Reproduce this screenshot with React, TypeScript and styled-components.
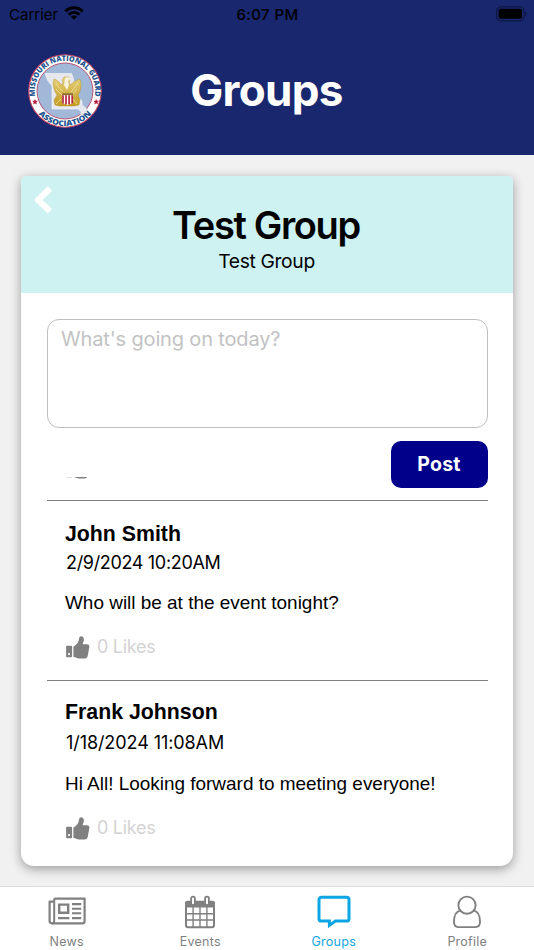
import React from "react";
import styled, { createGlobalStyle } from "styled-components";

type PostType = {
  name: string;
  date: string;
  text: string;
  likes: number;
};

type PostStylePropsType = {
  $first?: boolean;
};

type TabStylePropsType = {
  $active?: boolean;
};

const posts: PostType[] = [
  {
    name: "John Smith",
    date: "2/9/2024 10:20AM",
    text: "Who will be at the event tonight?",
    likes: 0,
  },
  {
    name: "Frank Johnson",
    date: "1/18/2024 11:08AM",
    text: "Hi All! Looking forward to meeting everyone!",
    likes: 0,
  },
];

const App = () => {
  return (
    <Screen>
      <GlobalStyle />
      <Header>
        <StatusBar>
          <Carrier>
            Carrier
            <WifiIcon />
          </Carrier>
          <Clock>6:07 PM</Clock>
          <BatteryBox>
            <BatteryIcon />
          </BatteryBox>
        </StatusBar>
        <TitleBar>
          <LogoBox>
            <Logo />
          </LogoBox>
          <PageTitle>Groups</PageTitle>
        </TitleBar>
      </Header>
      <Content>
        <Card>
          <CardHead>
            <BackBtn aria-label="Back">
              <BackIcon />
            </BackBtn>
            <GroupName>Test Group</GroupName>
            <GroupText>Test Group</GroupText>
          </CardHead>
          <CardBody>
            <PostInput placeholder="What's going on today?" />
            <PostActions>
              {/* bottom edge of the like icon scrolled under the form */}
              <ScrolledIcon>
                <LikeIcon />
              </ScrolledIcon>
              <PostBtn>Post</PostBtn>
            </PostActions>
            {posts.map((post, index) => (
              <Post key={post.name}>
                <PostName $first={index === 0}>{post.name}</PostName>
                <PostDate $first={index === 0}>{post.date}</PostDate>
                <PostText $first={index === 0}>{post.text}</PostText>
                <Likes>
                  <LikeIcon />
                  <span>{post.likes} Likes</span>
                </Likes>
              </Post>
            ))}
          </CardBody>
        </Card>
      </Content>
      <TabBar>
        <Tab>
          <NewsIcon />
          <TabLabel>News</TabLabel>
        </Tab>
        <Tab>
          <EventsIcon />
          <TabLabel>Events</TabLabel>
        </Tab>
        <Tab $active>
          <GroupsIcon />
          <TabLabel>Groups</TabLabel>
        </Tab>
        <Tab>
          <ProfileIcon />
          <TabLabel>Profile</TabLabel>
        </Tab>
      </TabBar>
    </Screen>
  );
};

export default App;

const WifiIcon = () => (
  <svg width="20" height="14" viewBox="0 0 20 14" fill="none">
    <path d="M1.4 5.4a12 12 0 0 1 17.2 0" stroke="#000" strokeWidth="3.1" />
    <path d="M4.7 8.7a7.4 7.4 0 0 1 10.6 0" stroke="#000" strokeWidth="2.7" />
    <path d="M10 13.8 6.9 10.7a4.4 4.4 0 0 1 6.2 0z" fill="#000" />
  </svg>
);

const BatteryIcon = () => (
  <svg width="32" height="16" viewBox="0 0 32 16">
    <rect
      x="0.7"
      y="0.8"
      width="27.3"
      height="14"
      rx="4"
      fill="none"
      stroke="#0e1843"
      strokeWidth="1.2"
    />
    <rect x="2.6" y="2.8" width="23.4" height="10" rx="2" fill="#000" />
    <path d="M29.4 5.4c1.6.6 1.6 4.2 0 4.8z" fill="#0e1843" />
  </svg>
);

const BackIcon = () => (
  <svg width="20" height="28" viewBox="0 0 20 28" fill="none">
    <path
      d="M14.7 4.7 5.1 14l9.6 9.1"
      stroke="#fff"
      strokeWidth="6.2"
      strokeLinejoin="round"
      strokeLinecap="square"
    />
  </svg>
);

const LikeIcon = () => (
  <svg width="24" height="23" viewBox="0 0 24 23" fill="#808080">
    <path
      fillRule="evenodd"
      d="M1 9.8h4.2a.9.9 0 0 1 .9.9v9.6a.9.9 0 0 1-.9.9H1a.9.9 0 0 1-.9-.9v-9.6a.9.9 0 0 1 .9-.9zM3 17a1.1 1.1 0 1 0 0 2.2A1.1 1.1 0 0 0 3 17z"
    />
    <path d="M7.4 10.6c2-1 3.4-2.6 4.6-4.4C13 4.6 12.800 2.400 13.600 1.100c.9-1.500 4.300-.9 4.300 2.500 0 2-1 3.300-1.200 4.600h4.200c1.900 0 2.700 1.200 2.400 3l-1.500 8.200c-.3 1.900-1.300 3-3.200 3.100-4.400.3-6.300-.1-9.200-1.100-.8-.3-1.300-.4-2-.4z" />
  </svg>
);

const Logo = () => (
  <svg width="76" height="76" viewBox="-38 -38 76 76">
    <defs>
      <path id="arcTop" d="M-29.6 6A30.2 30.2 0 1 1 29.6 6" />
      <path id="arcBottom" d="M-35 0A35 35 0 0 0 35 0" />
      <linearGradient id="gold" x1="0" y1="0" x2="0" y2="1">
        <stop offset="0" stopColor="#e5d27c" />
        <stop offset="1" stopColor="#c39a1e" />
      </linearGradient>
    </defs>
    <circle r="36.3" fill="#fff" stroke="#c5425f" strokeWidth="1.1" />
    <circle r="28" fill="#a1b8d8" stroke="#b85370" strokeWidth="1" />
    <path
      d="M-20-17.5H6.5l2 5 .5 14 4 6 4 2 0 4 5 5v4l-3 3-3-1 0-4-3-2.5H-13V-5l-4-5z"
      fill="#e6e8ed"
      stroke="#f6f6f8"
      strokeWidth="0.6"
    />
    <path
      d="M-11-12c2 0 5 3 8 6l1-3-1-2 2-3h5l1 3-1 2 1 3c3-3 7-5 10-6 2 6 1 12-2 16l2 5-1 5-5 1H-5l-5-1-1-5 3-5c-3-4-5-11-3-16z"
      fill="url(#gold)"
      stroke="#b39126"
      strokeWidth="0.4"
    />
    <path
      d="M-9-8c2 4 5 7 7 8M13-8C10-4 8-1 6 1M-9-2l6 6M12-2 7 4M-9 13l5-5M12 13 8 8"
      stroke="#f8edb8"
      strokeWidth="0.7"
      fill="none"
    />
    <path d="m0-13 3-1 3 2-3 2 1 4-2 5-3-5z" fill="#f6f2dc" />
    <path d="M-2.9 2.5H8.1v9.6l-5.5 1.6-5.5-1.6z" fill="#fff" />
    <path
      d="M-2 4.3v8.2M1 4.3v9M4.1 4.3v9M7.2 4.3v8.2"
      stroke="#b32842"
      strokeWidth="1.7"
    />
    <path d="M-2.9 2.2H8.1v2H-2.9z" fill="#8f6d27" />
    <path
      d="m-30 8.6 .6 1.5 1.7.1-1.3 1.1.4 1.6-1.4-.9-1.4.9.4-1.6-1.3-1.1 1.7-.1zM31.2 8.6l.6 1.5 1.7.1-1.3 1.1.4 1.6-1.4-.9-1.4.9.4-1.6-1.3-1.1 1.7-.1z"
      fill="#b51f3f"
      stroke="#b51f3f"
      strokeWidth="0.6"
    />
    <LogoText>
      <textPath
        href="#arcTop"
        startOffset="50%"
        textAnchor="middle"
        textLength="105"
        lengthAdjust="spacingAndGlyphs"
      >
        MISSOURI NATIONAL GUARD
      </textPath>
    </LogoText>
    <LogoText>
      <textPath
        href="#arcBottom"
        startOffset="50%"
        textAnchor="middle"
        textLength="60"
        lengthAdjust="spacingAndGlyphs"
      >
        ASSOCIATION
      </textPath>
    </LogoText>
  </svg>
);

const NewsIcon = () => (
  <svg width="38" height="34" viewBox="0 0 38 34" fill="none" stroke="#808080">
    <path
      d="M6.2 3.6H36.6V26a2.400 2.400 0 0 1-2.400 2.400H4A2.600 2.600 0 0 1 1.600 26V6.600h4.200"
      strokeWidth="2.2"
      strokeLinejoin="round"
    />
    <path d="M6.2 3.6v22.100c0 1.800-.8 2.700-2.200 2.700" strokeWidth="2" />
    <path d="M11.2 9.600h9v8.200h-9z" strokeWidth="2.4" />
    <path
      d="M24 9.100h9.200M24 13.700h9.200M24 18.300h9.200M24 23.100h9.200M10 23.100h11.400"
      strokeWidth="2.1"
    />
  </svg>
);

const EventsIcon = () => (
  <svg width="32" height="34" viewBox="0 0 32 34" fill="none" stroke="#808080">
    <path
      d="M3.2 5.7h25.6a2 2 0 0 1 2 2V12.5H1.2V7.7a2 2 0 0 1 2-2z"
      fill="#808080"
      stroke="none"
    />
    <rect x="2" y="7" width="28" height="25.3" rx="2" strokeWidth="2" />
    <path
      d="M9.1 12v20M16 12v20M22.9 12v20M2 18.7h28M2 25h28"
      strokeWidth="1.4"
    />
    <rect
      x="7.1"
      y="1.7"
      width="3.8"
      height="8.4"
      rx="1.9"
      fill="#fff"
      strokeWidth="1.8"
    />
    <rect
      x="21.1"
      y="1.7"
      width="3.8"
      height="8.4"
      rx="1.9"
      fill="#fff"
      strokeWidth="1.8"
    />
  </svg>
);

const GroupsIcon = () => (
  <svg width="34" height="34" viewBox="0 0 34 34" fill="none">
    <path
      d="M4.4 2.3h25.2a2.4 2.4 0 0 1 2.4 2.4v19a2.4 2.4 0 0 1-2.4 2.4H18.4l-6 4.3v-4.3H4.4A2.4 2.4 0 0 1 2 23.700v-19a2.4 2.4 0 0 1 2.4-2.4z"
      stroke="#0ea5e3"
      strokeWidth="3"
    />
  </svg>
);

const ProfileIcon = () => (
  <svg width="30" height="34" viewBox="0 0 30 34" fill="none" stroke="#808080">
    <circle cx="15" cy="10.200" r="8.6" strokeWidth="1.9" />
    <path
      d="M8.4 15.4C4.2 16.400 2 20.800 2 26.800c0 3 1.5 5.300 4.300 5.300h17.400c2.800 0 4.300-2.300 4.300-5.300 0-6-2.200-10.400-6.400-11.400"
      strokeWidth="1.9"
    />
  </svg>
);

const GlobalStyle = createGlobalStyle`
  * {
    box-sizing: border-box;
  }

  body {
    margin: 0;
    font-family: Inter, "Liberation Sans", sans-serif;
    color: #000;
  }
`;

const Screen = styled.div`
  display: flex;
  flex-direction: column;
  width: 534px;
  height: 950px;
  overflow: hidden;
  background-color: #f1f1f1;
`;

const Header = styled.header`
  flex: none;
  height: 155px;
  background-color: #19276f;
`;

const StatusBar = styled.div`
  display: grid;
  grid-template-columns: 1fr auto 1fr;
  align-items: center;
  height: 28px;
  padding: 0 6px 0 9px;
  font-size: 15px;
`;

const Carrier = styled.span`
  display: flex;
  align-items: center;
  gap: 6px;

  svg {
    margin-bottom: 3px;
  }
`;

const Clock = styled.span`
  margin-right: 2px;
  font-weight: 500;
  letter-spacing: 0.4px;
`;

const BatteryBox = styled.span`
  display: flex;
  justify-content: flex-end;
  margin-bottom: 1px;
`;

const TitleBar = styled.div`
  display: grid;
  grid-template-columns: 1fr auto 1fr;
  align-items: center;
  height: 126px;
`;

const LogoBox = styled.div`
  display: flex;
  padding-left: 27px;
`;

const LogoText = styled.text`
  font-family: "Open Sans", "Liberation Sans", sans-serif;
  font-size: 7.6px;
  font-weight: 800;
  fill: #1f5590;
`;

const PageTitle = styled.h1`
  margin: 0 1px 2px 0;
  color: #fff;
  font-size: 44px;
  font-weight: 700;
  line-height: 52px;
  letter-spacing: -0.7px;
`;

const Content = styled.main`
  flex: 1;
  padding: 21px 21px 20px;
`;

const Card = styled.section`
  height: 690px;
  background-color: #fff;
  border-radius: 5px 5px 13px 13px;
  box-shadow: 0 3px 11px rgba(0, 0, 0, 0.36);
`;

const CardHead = styled.div`
  position: relative;
  height: 117px;
  padding-top: 25px;
  background-color: #cef1f2;
  border-radius: 5px 5px 0 0;
  text-align: center;
`;

const BackBtn = styled.button`
  position: absolute;
  top: 10px;
  left: 12px;
  display: flex;
  padding: 0;
  border: none;
  background: none;
`;

const GroupName = styled.h2`
  margin: 0 2px 0 0;
  font-size: 38px;
  font-weight: 600;
  line-height: 48px;
  letter-spacing: -1.35px;
`;

const GroupText = styled.p`
  margin: 0 1px 0 0;
  font-size: 19.3px;
  line-height: 24px;
  letter-spacing: -0.35px;
`;

const CardBody = styled.div`
  padding: 26px 25.5px 0 26px;
`;

const PostInput = styled.textarea`
  display: block;
  width: 100%;
  height: 109px;
  padding: 7px 13px;
  border: 1.4px solid #bfbfbf;
  border-radius: 12px;
  resize: none;
  font-family: Inter, "Liberation Sans", sans-serif;
  font-size: 20px;
  line-height: 25px;
  letter-spacing: -0.15px;

  &::placeholder {
    color: #c2c2c4;
  }
`;

const PostActions = styled.div`
  display: flex;
  justify-content: space-between;
  height: 72px;
  padding-top: 13px;
`;

const ScrolledIcon = styled.span`
  display: flex;
  align-items: flex-end;
  width: 24px;
  height: 2.5px;
  margin: 35.5px 0 0 19px;
  overflow: hidden;

  svg {
    flex: none;
  }
`;

const PostBtn = styled.button`
  width: 97px;
  height: 46.5px;
  padding: 0;
  border: none;
  border-radius: 10px;
  background-color: #00008b;
  color: #fff;
  font-family: Inter, "Liberation Sans", sans-serif;
  font-size: 19.5px;
  font-weight: 700;
  letter-spacing: 0.2px;
`;

const Post = styled.article`
  height: 180px;
  padding-left: 18px;
  border-top: 1.3px solid #808080;
`;

const PostName = styled.h3<PostStylePropsType>`
  margin: 0;
  padding-top: ${(props) => (props.$first ? "20px" : "18px")};
  font-family: "Liberation Sans", Arial, sans-serif;
  font-size: 21.3px;
  font-weight: bold;
  line-height: 26px;
`;

const PostDate = styled.p<PostStylePropsType>`
  margin: ${(props) => (props.$first ? "5px 0 0 1px" : "7px 0 0 1px")};
  font-size: 18px;
  line-height: 22px;
  letter-spacing: ${(props) => (props.$first ? "-0.33px" : "-0.08px")};
`;

const PostText = styled.p<PostStylePropsType>`
  margin: ${(props) => (props.$first ? "17px 0 0" : "18px 0 0")};
  font-family: "Liberation Sans", Arial, sans-serif;
  font-size: 18.95px;
  line-height: 24px;
`;

const Likes = styled.div`
  display: flex;
  align-items: center;
  gap: 7px;
  margin-top: 20px;
  padding-left: 1px;
  color: #d3d3d3;
  font-size: 18px;
  line-height: 24px;
  letter-spacing: -0.3px;
`;

const TabBar = styled.nav`
  display: grid;
  flex: none;
  grid-template-columns: repeat(4, 1fr);
  height: 64px;
  border-top: 1px solid #dedede;
  background-color: #fff;
`;

const Tab = styled.div<TabStylePropsType>`
  display: flex;
  flex-direction: column;
  align-items: center;
  padding-top: 8px;
  color: ${(props) => (props.$active ? "#0ea5e3" : "#808080")};
`;

const TabLabel = styled.span`
  margin-top: 4px;
  font-size: 12.5px;
  line-height: 18px;
  letter-spacing: 0.25px;
`;
